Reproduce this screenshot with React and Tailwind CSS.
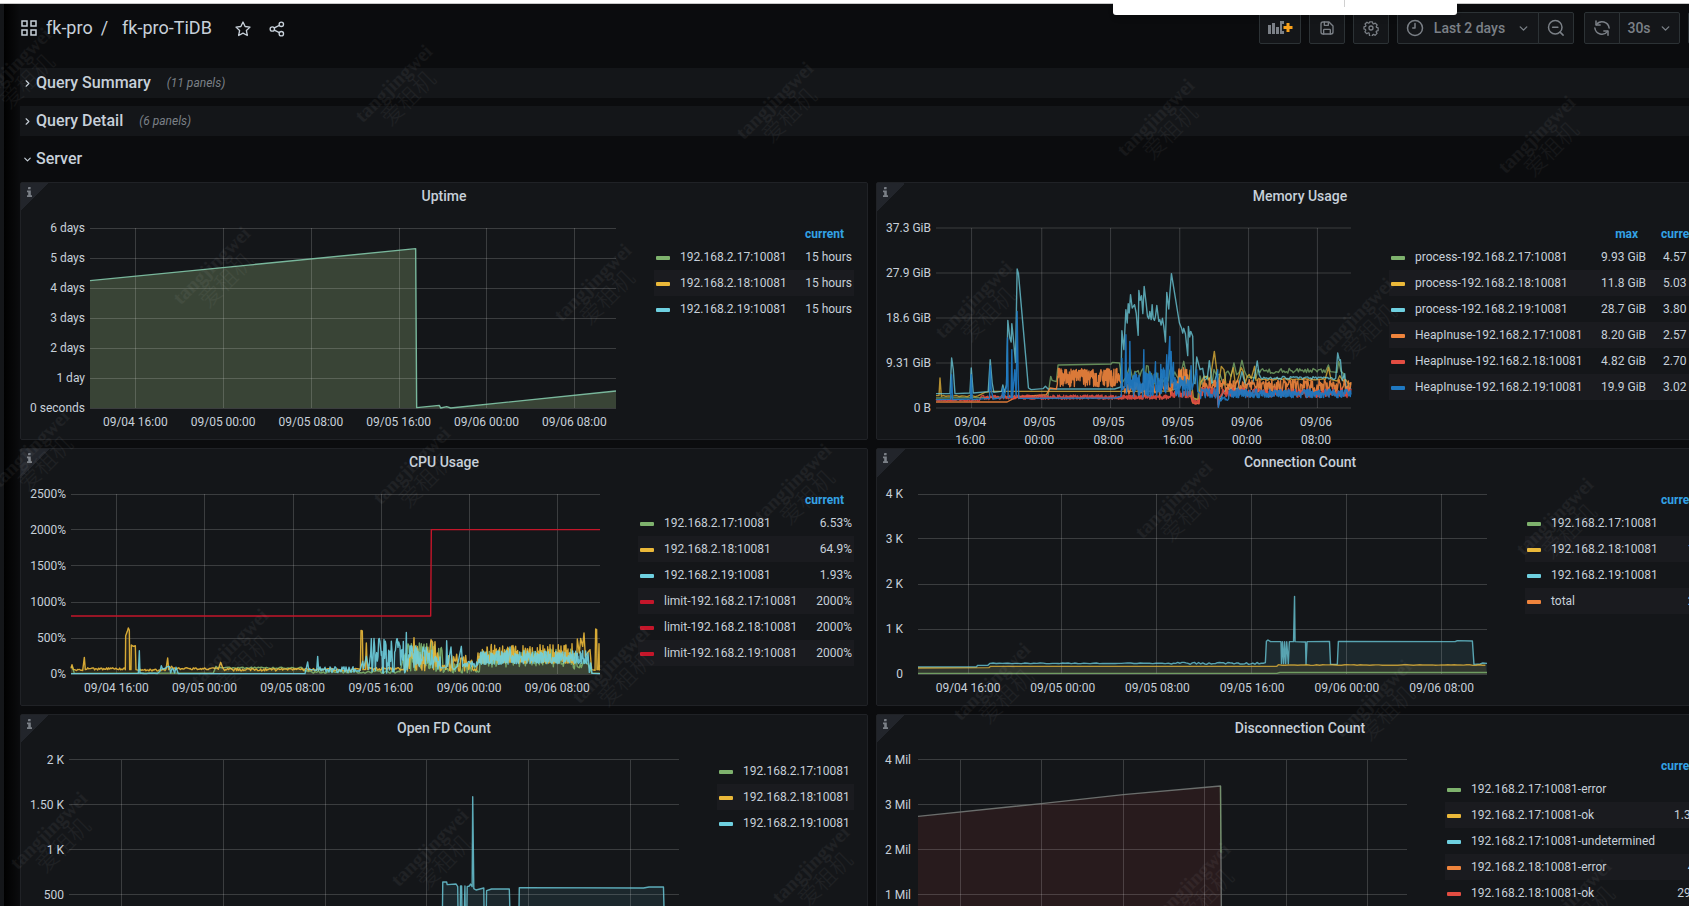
import { ChevronDown, ChevronRight } from 'lucide-react'

const GREEN = '#7eb26d'
const YELLOW = '#eab839'
const CYAN = '#6ed0e0'
const ORANGE = '#ef843c'
const RED = '#e24d42'
const BLUE = '#1f78c1'
const LIMIT = '#c4162a'

/** Repeatable noise between two y values, so that the charts look the same on every render. */
function noise(from, to, step, top, bottom, seed, skew = 1) {
  const out = []
  let s = seed * 7919
  for (let x = from; x <= to; x += step) {
    s = (s * 16807) % 2147483647
    out.push([x, bottom - (bottom - top) * ((s % 1000) / 1000) ** skew])
  }
  return out
}

function toPoints(list) {
  return list.map(([x, y]) => `${x},${y.toFixed(1)}`).join(' ')
}

/* Every plot is 540 units tall; range is [left, right] in the same units. */

const uptime = {
  title: 'Uptime',
  range: [270, 1848],
  top: 175,
  yLabels: ['6 days', '5 days', '4 days', '3 days', '2 days', '1 day', '0 seconds'],
  yClass: 'w-[56px] mr-[5px]',
  xLabels: ['09/04 16:00', '09/05 00:00', '09/05 08:00', '09/05 16:00', '09/06 00:00', '09/06 08:00'],
  grid: [406, 671, 933, 1198, 1459, 1723],
  legendClass: 'w-[200px]',
  columns: ['current'],
  legend: [
    [GREEN, '192.168.2.17:10081', '15 hours'],
    [YELLOW, '192.168.2.18:10081', '15 hours'],
    [CYAN, '192.168.2.19:10081', '15 hours'],
  ],
  series: [
    {
      color: '#82c6a8',
      fill: '#7d9568',
      fillOpacity: 0.36,
      points: [[270, 333], [1247, 237], [1250, 714], [1318, 707], [1322, 715], [1340, 711], [1352, 715], [1848, 664]],
    },
  ],
}

const memory = {
  title: 'Memory Usage',
  range: [198, 1446],
  top: 175,
  yLabels: ['37.3 GiB', '27.9 GiB', '18.6 GiB', '9.31 GiB', '0 B'],
  yClass: 'w-[46px] mr-[5px]',
  xLabels: ['09/04\n16:00', '09/05\n00:00', '09/05\n08:00', '09/05\n16:00', '09/06\n00:00', '09/06\n08:00'],
  grid: [305, 516, 723, 931, 1138, 1345],
  labelShift: -4,
  legendClass: 'w-[321px]',
  columns: ['max', 'current'],
  legend: [
    [GREEN, 'process-192.168.2.17:10081', '9.93 GiB', '4.57 GiB'],
    [YELLOW, 'process-192.168.2.18:10081', '11.8 GiB', '5.03 GiB'],
    [CYAN, 'process-192.168.2.19:10081', '28.7 GiB', '3.80 GiB'],
    [ORANGE, 'HeapInuse-192.168.2.17:10081', '8.20 GiB', '2.57 GiB'],
    [RED, 'HeapInuse-192.168.2.18:10081', '4.82 GiB', '2.70 GiB'],
    [BLUE, 'HeapInuse-192.168.2.19:10081', '19.9 GiB', '3.02 GiB'],
  ],
  series: [
    {
      color: GREEN,
      opacity: 0.75,
      points: [
        [198, 685], [330, 684], [535, 678], [540, 640], [543, 620], [547, 632], [560, 636], [565, 586], [725, 583],
        [728, 578], [750, 580], [757, 640], [770, 622], [781, 590], [790, 630],
        ...noise(796, 925, 5, 585, 645, 41), [930, 630], [943, 575], [950, 610], [958, 640], [970, 690], [985, 690],
        ...noise(992, 1080, 6, 598, 650, 12), [1085, 620], [1094, 580], [1102, 615], [1110, 608], [1118, 572],
        [1126, 605], [1134, 622], [1160, 625], [1166, 600], ...noise(1172, 1370, 4, 596, 611, 77),
        [1378, 586], [1384, 606], [1404, 608], [1409, 575], [1416, 605], [1424, 612], [1430, 655], [1446, 642],
      ],
    },
    {
      color: YELLOW,
      opacity: 0.75,
      points: [
        [198, 678], [207, 678], [210, 625], [214, 680], ...noise(220, 330, 8, 677, 681, 3), [345, 668], [370, 665],
        [750, 665], [900, 664], [926, 655], ...noise(930, 965, 4, 600, 655, 21), [972, 685], [988, 690],
        ...noise(994, 1026, 5, 595, 640, 8), [1035, 545], [1042, 600], [1048, 640], [1056, 590], [1064, 600],
        [1070, 645], [1080, 648], ...noise(1086, 1150, 6, 590, 645, 4), [1156, 590], ...noise(1160, 1370, 4, 626, 632, 17),
        [1378, 594], [1386, 630], [1405, 634], [1412, 618], [1422, 634], [1430, 630], [1438, 642], [1446, 640],
      ],
    },
    {
      color: CYAN,
      opacity: 0.75,
      points: [
        [198, 672], [240, 672], [245, 565], [250, 600], [255, 672], [300, 670], [304, 595], [310, 670], [355, 666],
        [361, 570], [367, 640], [372, 668], [395, 665], [399, 646], [404, 668], [410, 645], [414, 452], [420, 505],
        [424, 517], [426, 462], [432, 520], [437, 578], [442, 298], [446, 312], [476, 655], [484, 660], [520, 657],
        [527, 650], [535, 658], [735, 658], [754, 652], [757, 483], [763, 540], [769, 420], [773, 460], [776, 402],
        [779, 430], [783, 375], [788, 415], [795, 405], [800, 430], [806, 497], [808, 362], [812, 392], [816, 378],
        [820, 432], [824, 350], [830, 402], [834, 440], [838, 447], [841, 425], [845, 450], [848, 405], [851, 445],
        [855, 452], [858, 440], [862, 407], [868, 455], [871, 450], [875, 466], [879, 446], [883, 470],
        [888, 517], [892, 368], [898, 418], [901, 375], [906, 312], [930, 460], [936, 474], [940, 490], [943, 476],
        [948, 492], [955, 558], [957, 470], [961, 502], [964, 485], [970, 500], [973, 640],
        [977, 642], [982, 562], [992, 600], [1000, 596], [1006, 632], [1014, 625], [1020, 573], [1028, 640],
        [1036, 635], [1044, 605], [1047, 705], [1060, 672], ...noise(1076, 1110, 5, 630, 665, 91),
        [1118, 606], [1128, 645], [1150, 640], [1158, 610], [1164, 574], [1170, 615],
        ...noise(1176, 1400, 4, 620, 629, 51), [1406, 550], [1411, 572], [1414, 570], [1420, 632], [1427, 612],
        [1432, 662], [1446, 655],
      ],
    },
    {
      color: ORANGE,
      points: [
        [198, 697], [412, 697], [425, 690], [440, 682], [530, 675], [541, 655], [560, 658],
        ...noise(563, 750, 1, 596, 652, 5), ...noise(757, 925, 3, 628, 680, 9), ...noise(928, 956, 1, 590, 655, 6),
        [962, 672], [970, 700], [988, 702], [996, 660], ...noise(1000, 1446, 2, 628, 672, 15),
      ],
    },
    {
      color: RED,
      points: [
        ...noise(198, 330, 3, 689, 695, 31), ...noise(333, 420, 2, 676, 690, 32), ...noise(422, 900, 1, 676, 689, 33),
        ...noise(902, 965, 1, 664, 684, 34), ...noise(968, 990, 1, 684, 704, 35), ...noise(993, 1044, 2, 650, 680, 36),
        [1047, 712], [1050, 680], ...noise(1054, 1446, 2, 655, 684, 37),
      ],
    },
    {
      color: BLUE,
      opacity: 0.95,
      points: [
        [198, 690], [242, 689], [245, 615], [248, 690], [302, 688], [304, 615], [307, 690], [359, 686], [361, 588],
        [364, 660], [370, 688], [396, 684], [399, 655], [402, 686], [410, 650], [413, 505], [415, 684], [424, 684],
        [426, 540], [428, 684], [435, 600], [439, 680], [442, 425], [445, 620], [447, 686], [735, 685], [755, 680],
        [757, 566], [759, 660], [766, 650], [769, 495], [771, 670], [775, 610], [779, 660], [781, 515], [783, 655],
        ...noise(786, 820, 1, 608, 682, 61), [823, 540], [824, 660], ...noise(826, 855, 1, 605, 682, 62),
        [858, 576], [859, 660], ...noise(860, 873, 1, 610, 680, 68), [874, 584], [876, 670],
        ...noise(877, 890, 1, 595, 680, 63), [892, 555], [894, 660],
        [898, 560], [901, 500], [903, 650], [905, 545], [908, 640], [912, 578], [914, 660],
        ...noise(916, 962, 1, 620, 682, 64), [965, 588], [968, 660], [982, 600], [985, 665],
        ...noise(990, 1043, 2, 655, 688, 65), [1045, 600], [1047, 713], [1052, 690], ...noise(1056, 1078, 2, 680, 696, 66),
        ...noise(1080, 1446, 1, 658, 684, 67),
      ],
    },
  ],
}

const cpu = {
  title: 'CPU Usage',
  range: [213, 1800],
  top: 163,
  yLabels: ['2500%', '2000%', '1500%', '1000%', '500%', '0%'],
  yClass: 'w-[37px] mr-[5px]',
  xLabels: uptime.xLabels,
  grid: [349, 613, 880, 1144, 1408, 1672],
  legendClass: 'w-[216px]',
  columns: ['current'],
  legend: [
    [GREEN, '192.168.2.17:10081', '6.53%'],
    [YELLOW, '192.168.2.18:10081', '64.9%'],
    [CYAN, '192.168.2.19:10081', '1.93%'],
    [LIMIT, 'limit-192.168.2.17:10081', '2000%'],
    [LIMIT, 'limit-192.168.2.18:10081', '2000%'],
    [LIMIT, 'limit-192.168.2.19:10081', '2000%'],
  ],
  series: [
    {
      color: GREEN,
      fill: GREEN,
      fillOpacity: 0.14,
      points: [
        [213, 680], [218, 684], [223, 701], [640, 700], [648, 680], ...noise(654, 910, 5, 682, 687, 2),
        ...noise(915, 1200, 5, 692, 701, 6), ...noise(1210, 1326, 2, 605, 695, 7), ...noise(1330, 1440, 3, 670, 700, 8),
        ...noise(1442, 1718, 2, 625, 682, 9), ...noise(1720, 1745, 3, 665, 692, 10), [1752, 662], [1765, 675],
        [1775, 700], [1800, 701],
      ],
    },
    {
      color: YELLOW,
      fill: YELLOW,
      fillOpacity: 0.1,
      points: [
        [213, 686], [216, 675], [220, 690], ...noise(224, 250, 3, 688, 693, 1), [253, 653], [256, 690],
        ...noise(260, 374, 3, 684, 691, 2), [376, 690], [377, 588], [382, 575], [385, 565], [388, 572], [389, 690],
        [393, 690], [394, 616], [400, 620], [406, 618], [408, 690], [416, 692], ...noise(420, 500, 3, 688, 694, 3),
        [503, 655], [506, 690], [515, 680], ...noise(520, 655, 3, 684, 690, 4), [662, 668], [668, 684],
        ...noise(674, 1078, 3, 686, 694, 5), [1081, 692], [1083, 572], [1087, 574], [1089, 690], [1096, 690],
        [1099, 610], [1102, 690], ...noise(1105, 1215, 3, 682, 692, 6), ...noise(1218, 1239, 2, 630, 695, 7),
        [1242, 594], [1246, 680], ...noise(1248, 1290, 2, 620, 695, 17), [1293, 600], [1298, 608], [1301, 690],
        [1305, 606], [1308, 680], [1312, 640], ...noise(1322, 1432, 3, 640, 694, 8, 1.5),
        ...noise(1434, 1716, 1, 612, 670, 9, 1.8), ...noise(1718, 1730, 3, 640, 680, 10),
        [1732, 598], [1738, 640], [1742, 596], [1748, 620], [1752, 580], [1756, 650], [1762, 640], [1770, 630],
        [1775, 690], [1785, 692], [1787, 568], [1790, 570], [1791, 690], [1795, 690], [1797, 612], [1798, 690], [1800, 692],
      ],
    },
    {
      color: CYAN,
      fill: CYAN,
      fillOpacity: 0.08,
      points: [
        [213, 702], [415, 701], [418, 633], [420, 701], ...noise(424, 478, 8, 700, 702, 1),
        ...noise(480, 530, 4, 677, 701, 2), [535, 702], [915, 702], [923, 667], [926, 690], [935, 690], [950, 692],
        [953, 650], [956, 692], ...noise(960, 1080, 3, 680, 699, 3), [1088, 665], [1091, 686], [1099, 650], [1106, 690],
        ...noise(1112, 1217, 2, 588, 702, 4), [1219, 578], [1221, 690], ...noise(1224, 1300, 2, 618, 685, 5),
        ...noise(1304, 1322, 2, 645, 692, 6), [1338, 684], [1340, 603], [1343, 680], [1353, 622], [1357, 684],
        [1362, 690], [1372, 680], [1384, 620], [1388, 680], ...noise(1392, 1432, 2, 664, 682, 7),
        ...noise(1434, 1529, 1, 632, 674, 8, 1.3), [1530, 622], ...noise(1532, 1760, 1, 632, 672, 9, 1.3), [1764, 640],
        [1768, 698], [1772, 670], [1776, 701], [1800, 702],
      ],
    },
    { color: LIMIT, opacity: 1, points: [[213, 529], [1292, 529], [1294, 270], [1800, 270]] },
  ],
}

const connections = {
  title: 'Connection Count',
  range: [92, 1183],
  top: 163,
  yLabels: ['4 K', '3 K', '2 K', '1 K', '0'],
  yClass: 'w-[18px] mr-[15px]',
  xLabels: uptime.xLabels,
  grid: [188, 367, 550, 731, 914, 1096],
  legendClass: 'w-[185px]',
  columns: ['current'],
  legend: [
    [GREEN, '192.168.2.17:10081', '33'],
    [YELLOW, '192.168.2.18:10081', '192'],
    [CYAN, '192.168.2.19:10081', '38'],
    [ORANGE, 'total', '263'],
  ],
  series: [
    {
      color: CYAN,
      fill: CYAN,
      fillOpacity: 0.1,
      opacity: 0.75,
      points: [
        [92, 682], [204, 682], [206, 677], [226, 677], [230, 671], ...noise(236, 575, 6, 670, 672, 3),
        ...noise(578, 758, 4, 668, 674, 5), [760, 605], [763, 601], [768, 606], [788, 606], [789, 672], [791, 606],
        [793, 672], [795, 606], [797, 672], [799, 606], [802, 672], [804, 606], [812, 606], [814, 470], [815, 606],
        [835, 607], [836, 674], [838, 606], [881, 605], [883, 674], [896, 674], [898, 605], [1122, 606], [1126, 603],
        [1155, 604], [1158, 674], [1170, 673], [1175, 670], [1183, 671],
      ],
    },
    {
      color: YELLOW,
      fill: YELLOW,
      fillOpacity: 0.1,
      opacity: 0.75,
      points: [[92, 685], [228, 684], [231, 680], [780, 680], [783, 675], ...noise(790, 1183, 6, 675, 677, 8)],
    },
    { color: GREEN, fill: GREEN, fillOpacity: 0.2, opacity: 0.8, points: [[92, 701], [780, 701], [786, 698], [1183, 698]] },
  ],
}

const openFds = {
  title: 'Open FD Count',
  range: [124, 1224],
  top: 182,
  yLabels: ['2 K', '1.50 K', '1 K', '500', '0'],
  yClass: 'w-[35px] mr-[5px]',
  xLabels: uptime.xLabels,
  grid: [219, 403, 586, 769, 952, 1136],
  legendClass: 'w-[137px]',
  columns: [],
  legend: [
    [GREEN, '192.168.2.17:10081'],
    [YELLOW, '192.168.2.18:10081'],
    [CYAN, '192.168.2.19:10081'],
  ],
  series: [
    {
      color: CYAN,
      fill: CYAN,
      fillOpacity: 0.1,
      opacity: 0.8,
      points: [
        [124, 692], [797, 690], [798, 548], [805, 548], [806, 556], [822, 554], [825, 562], [826, 690], [829, 690],
        [830, 560], [832, 560], [833, 690], [836, 690], [838, 560], [839, 690], [841, 690], [842, 562], [846, 560],
        [848, 554], [851, 562], [852, 292], [854, 568], [858, 572], [872, 566], [873, 690], [876, 690], [877, 574],
        [886, 569], [918, 569], [920, 690], [935, 690], [936, 565], [1160, 566], [1170, 563], [1196, 563],
        [1198, 690], [1224, 690],
      ],
    },
  ],
}

const disconnections = {
  title: 'Disconnection Count',
  range: [92, 1028],
  top: 182,
  yLabels: ['4 Mil', '3 Mil', '2 Mil', '1 Mil', '0'],
  yClass: 'w-[26px] mr-[7px]',
  xLabels: memory.xLabels,
  grid: [173, 328, 485, 640, 797, 953],
  legendClass: 'w-[265px]',
  columns: ['current'],
  legend: [
    [GREEN, '192.168.2.17:10081-error', '0'],
    [YELLOW, '192.168.2.17:10081-ok', '1.35 K'],
    [CYAN, '192.168.2.17:10081-undetermined', '0'],
    [ORANGE, '192.168.2.18:10081-error', '431'],
    [RED, '192.168.2.18:10081-ok', '295 K'],
  ],
  series: [
    {
      color: '#737876',
      fill: RED,
      fillOpacity: 0.1,
      points: [[92, 351], [328, 313], [485, 286], [671, 260], [673, 720], [1028, 720]],
    },
    { color: GREEN, opacity: 0.5, points: [[671, 259], [672, 460]] },
  ],
}

const PANELS = [uptime, memory, cpu, connections, openFds, disconnections]

function Plot({ chart }) {
  const [left, right] = chart.range
  const bottom = chart.top + 540
  const rows = chart.yLabels.length - 1
  return (
    <svg
      viewBox={`${left} ${chart.top} ${right - left} 540`}
      preserveAspectRatio="none"
      className="block h-[180px] w-full overflow-visible"
      fill="none"
      aria-hidden="true"
    >
      {chart.series
        .filter((s) => s.fill)
        .map((s, i) => (
          <polygon
            key={i}
            points={`${left},${bottom} ${toPoints(s.points)} ${right},${bottom}`}
            fill={s.fill}
            fillOpacity={s.fillOpacity}
          />
        ))}
      <g stroke="#ffffff" strokeOpacity="0.17" shapeRendering="crispEdges">
        {chart.yLabels.map((label, i) => {
          const y = chart.top + (540 / rows) * i
          return <line key={label} x1={left} x2={right} y1={y} y2={y} vectorEffect="non-scaling-stroke" />
        })}
        {chart.grid.map((x) => (
          <line key={x} x1={x} x2={x} y1={chart.top} y2={bottom} vectorEffect="non-scaling-stroke" />
        ))}
      </g>
      {chart.series.map((s, i) => (
        <polyline
          key={i}
          points={toPoints(s.points)}
          stroke={s.color}
          strokeOpacity={s.opacity ?? 0.9}
          strokeWidth="1.4"
          strokeLinejoin="round"
          vectorEffect="non-scaling-stroke"
        />
      ))}
    </svg>
  )
}

function XAxis({ chart }) {
  const [left, right] = chart.range
  const width = right - left
  const cell = (chart.grid[5] - chart.grid[0]) / 5
  const start = chart.grid[0] - left - cell / 2 + (chart.labelShift ?? 0)
  return (
    <div className="flex" style={{ marginLeft: `${(start / width) * 100}%` }}>
      {chart.xLabels.map((label) => (
        <span
          key={label}
          className="flex shrink-0 justify-center text-center whitespace-pre"
          style={{ width: `${(cell / (width - start)) * 100}%` }}
        >
          {label}
        </span>
      ))}
    </div>
  )
}

function Legend({ chart }) {
  return (
    <table className={`shrink-0 self-start ${chart.columns.length ? 'mt-[5px]' : 'mt-[7px]'} ${chart.legendClass}`}>
      {chart.columns.length > 0 && (
        <thead>
          <tr className="h-5 text-[#33a2e5]">
            <th aria-label="series" />
            {chart.columns.map((name) => (
              <th key={name} scope="col" className="p-0 pr-[10px] text-right font-bold">
                {name}
              </th>
            ))}
          </tr>
        </thead>
      )}
      <tbody>
        {chart.legend.map(([color, name, ...values]) => (
          <tr key={name} className="h-[26px] even:bg-[#1a1b1f]">
            <td className="w-full p-0 pl-[2px] whitespace-nowrap">
              <button type="button" className="flex items-center gap-[10px]">
                <span className="mt-[2px] h-1 w-[14px] rounded-[1px]" style={{ background: color }} />
                {name}
              </button>
            </td>
            {values.map((value, i) => (
              <td key={i} className="p-0 pr-[2px] pl-[15px] text-right whitespace-nowrap">
                {value}
              </td>
            ))}
          </tr>
        ))}
      </tbody>
    </table>
  )
}

function Panel({ chart }) {
  return (
    <section className="relative h-[258px] rounded-[2px] border border-[#202226] bg-[#141619]">
      <button
        type="button"
        aria-label="Panel info"
        className="absolute top-0 left-0 h-7 w-7 bg-linear-to-br from-[#22252b] from-50% to-transparent to-50%"
      >
        <svg viewBox="0 0 5 10" className="absolute top-1 left-[6px] h-[10px] w-[5px]" fill="#7b8087">
          <rect x="1" y="0" width="2.6" height="2.3" rx="0.4" />
          <path d="M0 3.5h3.8v4.8H5V10H0V8.300h1.200V5.200H0z" />
        </svg>
      </button>
      <h2 className="h-7 text-center text-sm leading-[26px] font-medium">{chart.title}</h2>
      <div className="flex pt-2 pr-[13px] pl-2 text-xs leading-[18px]">
        <div className={`flex h-[198px] shrink-0 flex-col justify-between text-right whitespace-nowrap ${chart.yClass}`}>
          {chart.yLabels.map((label) => (
            <span key={label}>{label}</span>
          ))}
        </div>
        <div className="mr-[38px] min-w-0 flex-1 pt-[9px]">
          <Plot chart={chart} />
          <div className="pt-[5px]">
            <XAxis chart={chart} />
          </div>
        </div>
        <Legend chart={chart} />
      </div>
    </section>
  )
}

function DashboardRow({ title, count, open }) {
  const Chevron = open ? ChevronDown : ChevronRight
  return (
    <button
      type="button"
      aria-expanded={Boolean(open)}
      className={`mb-2 flex h-[30px] w-full items-center pl-[2px] text-left ${open ? '' : 'bg-[#141619]'}`}
    >
      <Chevron size={11} strokeWidth={2.500} />
      <span className="ml-[3px] text-base leading-[30px] font-medium">{title}</span>
      {count && <span className="ml-4 text-xs text-[#7b8087] italic">({count} panels)</span>}
    </button>
  )
}

const toolButton = 'flex h-8 items-center justify-center border border-[#2c3235] bg-[#141619] text-[#7b8087]'

function Icon({ size = 16, className, children }) {
  return (
    <svg
      width={size}
      height={size}
      viewBox="0 0 24 24"
      fill="none"
      stroke="currentColor"
      strokeWidth="2"
      strokeLinecap="round"
      strokeLinejoin="round"
      className={className}
      aria-hidden="true"
    >
      {children}
    </svg>
  )
}

function Toolbar() {
  return (
    <div className="flex text-sm font-medium">
      <button type="button" aria-label="Add panel" className={`${toolButton} w-[42px] rounded-[2px]`}>
        <svg width="26" height="16" viewBox="0 0 26 16" className="shrink-0" aria-hidden="true">
          <g fill="#7b8087">
            <rect x="1" y="5" width="3" height="9" />
            <rect x="5" y="3" width="3" height="11" />
            <rect x="9" y="7" width="3" height="7" />
            <path d="M13 1h4v3h-2v7h2v3h-4z" />
          </g>
          <path d="M19.500 3h3v3h3v3h-3v3h-3V9h-3V6h3z" fill="#f9a11b" />
        </svg>
      </button>
      <button type="button" aria-label="Save dashboard" className={`${toolButton} ml-2 w-9 rounded-[2px]`}>
        <Icon>
          <path d="M3 6a3 3 0 0 1 3-3h9l6 6v9a3 3 0 0 1-3 3H6a3 3 0 0 1-3-3z" />
          <path d="M8 3v5h6V4M7 21v-6a1 1 0 0 1 1-1h8a1 1 0 0 1 1 1v6" />
        </Icon>
      </button>
      <button type="button" aria-label="Dashboard settings" className={`${toolButton} ml-2 w-9 rounded-[2px]`}>
        <Icon>
          <path d="M9.700 2h4.600l.7 2.900 1.300.6 2.600-1.600 3.100 3.200-1.500 2.600.5 1.300 2.600.8v4.400l-2.700.7-.6 1.300 1.500 2.600-3.200 3.100-2.600-1.500-1.300.6-.7 2.600H9.700L9 20.400l-1.300-.6-2.600 1.500L2 18.200l1.500-2.600-.6-1.300L.500 13.600V10.200l2.600-.8.6-1.300L2.200 5.500l3.200-3 2.500 1.600L9.200 3.600z" transform="translate(1 1) scale(.92)" />
          <circle cx="12" cy="12" r="3" />
        </Icon>
      </button>
      <button type="button" className={`${toolButton} ml-2 w-[142px] rounded-l-[2px]`}>
        <Icon size={18} className="shrink-0">
          <circle cx="12" cy="12" r="10" />
          <path d="M12 6v6H9" />
        </Icon>
        <span className="mr-3 ml-[10px] whitespace-nowrap">Last 2 days</span>
        <ChevronDown size={13} strokeWidth={2.500} />
      </button>
      <button type="button" aria-label="Zoom out" className={`${toolButton} -ml-px w-9 rounded-r-[2px]`}>
        <Icon size={18}>
          <circle cx="11" cy="11" r="9" />
          <path d="M21.500 21.500l-4-4M7.500 11h7" />
        </Icon>
      </button>
      <button type="button" aria-label="Refresh" className={`${toolButton} ml-[10px] w-9 rounded-l-[2px]`}>
        <Icon size={18}>
          <path d="M4 2.500v5.500h5.500M20 21.500V16h-5.500" />
          <path d="M4.500 7.500A9.500 9.500 0 0 1 21.500 12M19.500 16.500A9.500 9.500 0 0 1 2.500 12" />
        </Icon>
      </button>
      <button type="button" className={`${toolButton} -ml-px w-[61px] gap-2 rounded-r-[2px]`}>
        30s
        <ChevronDown size={13} strokeWidth={2.500} />
      </button>
      <button type="button" aria-label="Cycle view mode" className={`${toolButton} ml-2 w-9 rounded-[2px]`}>
        <Icon>
          <rect x="2" y="4" width="20" height="13" rx="1" />
          <path d="M8 21h8" />
        </Icon>
      </button>
    </div>
  )
}

function Header() {
  return (
    <header className="flex h-16 items-start justify-between pt-2">
      <div className="flex h-8 items-center text-lg">
        <svg width="16" height="16" viewBox="0 0 16 16" fill="none" stroke="currentColor" strokeWidth="1.500" className="ml-px">
          <path d="M1 1h5v5H1zM10 1h5v5h-5zM1 10h5v5H1zM10 10h5v5h-5z" />
        </svg>
        <a href="#folder" className="ml-[9px]">fk-pro</a>
        <span className="mx-2">/</span>
        <a href="#dashboard" className="ml-[6px]">fk-pro-TiDB</a>
        <button type="button" aria-label="Mark as favorite" className="mt-px ml-[23px]">
          <Icon>
            <path d="M12 1.500l3.200 6.800 7.300.9-5.400 5.100 1.400 7.400-6.500-3.600-6.500 3.600 1.400-7.400L1.500 9.200l7.300-.9z" />
          </Icon>
        </button>
        <button type="button" aria-label="Share dashboard" className="mt-px ml-[18px]">
          <Icon>
            <circle cx="18.500" cy="5" r="3.300" />
            <circle cx="5" cy="12" r="3.300" />
            <circle cx="18.500" cy="19" r="3.300" />
            <path d="M8 10.400l7.500-3.800M8 13.600l7.500 3.800" />
          </Icon>
        </button>
      </div>
      <Toolbar />
    </header>
  )
}

function Watermark() {
  const marks = []
  for (let k = 0; k < 3; k++) {
    for (let i = 0; i < 5; i++) {
      marks.push([20 + 381 * i + 18 * k, 52 + 17 * i + 382 * k])
      marks.push([219 + 381 * i + 18 * k, 251 + 17 * i + 382 * k])
    }
  }
  return (
    <div className="pointer-events-none absolute inset-0 overflow-hidden" aria-hidden="true">
      {marks.map(([x, y]) => (
        <div
          key={`${x}-${y}`}
          className="absolute flex h-11 w-28 -translate-x-1/2 -rotate-45 flex-col text-center font-['Liberation_Serif','Noto_Sans_CJK_SC',serif] text-xl leading-[22px] font-bold text-white/5"
          style={{ left: x, top: y }}
        >
          <span>tangjingwei</span>
          <span className="text-[22px] font-light">爱租机</span>
        </div>
      ))}
    </div>
  )
}

export default function App() {
  return (
    <div className="relative h-screen overflow-hidden bg-[#0b0c0e] font-[Roboto,sans-serif] text-[#c7d0d9]">
      <div className="h-1 border-b border-[#c8c8c8] bg-white" />
      <div className="flex h-full">
        <div className="w-1 shrink-0 bg-[#141619]" />
        <div className="w-4 shrink-0 bg-linear-to-r from-black to-transparent" />
        <main className="-mr-[35px] min-w-0 flex-1">
          <Header />
          <DashboardRow title="Query Summary" count={11} />
          <DashboardRow title="Query Detail" count={6} />
          <DashboardRow title="Server" open />
          <div className="grid grid-cols-2 gap-2">
            {PANELS.map((chart) => (
              <Panel key={chart.title} chart={chart} />
            ))}
          </div>
        </main>
      </div>
      <Watermark />
      <div className="absolute top-0 right-[232px] flex h-[15px] w-[344px] justify-center rounded-b-[3px] bg-white pl-[119px] shadow-md">
        <div className="h-[7px] w-px bg-[#d0d0d0]" />
      </div>
    </div>
  )
}
